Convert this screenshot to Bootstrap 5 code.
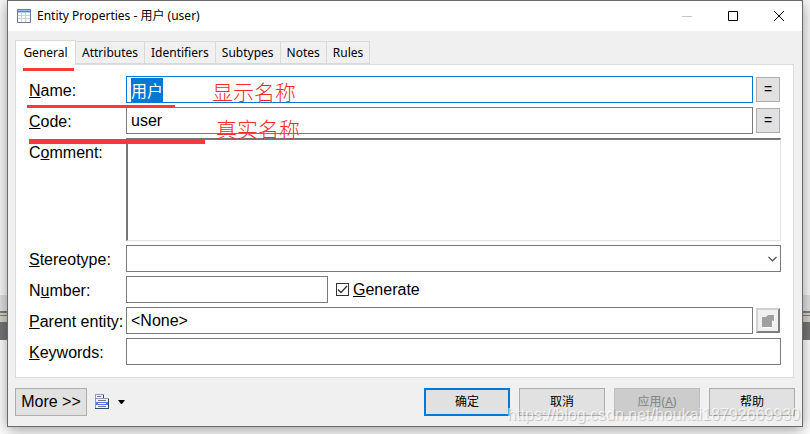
<!DOCTYPE html>
<html lang="zh-CN">
<head>
<meta charset="utf-8">
<meta name="viewport" content="width=device-width, initial-scale=1">
<title>Entity Properties</title>
<link href="https://cdn.jsdelivr.net/npm/bootstrap@5.3.0/dist/css/bootstrap.min.css" rel="stylesheet">
<style>
  :root { --ui: "Noto Sans", "Noto Sans CJK SC", sans-serif; --form: "Liberation Sans", "Noto Sans CJK SC", sans-serif; }
  body {
    font: 16px/20px var(--form); color: #000; overflow: hidden; min-height: 100vh;
    background: linear-gradient(#fafafa 295px, #e2e2e2 295px 311px, #808080 311px 313px, #d6d3ca 313px 315px, #808080 315px 316px, #d6d3ca 316px 322px, #777 322px 340px, #fff 340px);
  }
  .dialog { margin: 0 7px 7px; background: #f0f0f0; border: 1px solid #6a6a6a; box-shadow: 0 3px 14px rgba(0,0,0,.4); }
  .title-bar { height: 30px; background: #fff; font: 12px/16px var(--ui); padding-left: 9px; gap: 6px; }
  .win-btn { width: 46px; height: 30px; border: 0; background: none; padding: 0 0 2px; }
  .tabs { padding: 9px 7px 0; font: 12px/16px var(--ui); }
  .tabs button { height: 23px; padding: 0 6px; border: 1px solid #d9d9d9; border-left-width: 0; background: #f0f0f0; color: #000; flex: none; }
  .tabs button.active { height: 25px; width: 61px; border-left-width: 1px; border-bottom: 0; background: #fff; margin-bottom: -1px; z-index: 1; position: relative; }
  .pane { margin: 0 8px 0 7px; border: 1px solid #dcdcdc; background: #fff; padding: 11px 12px 12px 13px; }
  .form-line > label { width: 97px; flex: none; padding-top: 5px; white-space: nowrap; }
  .field { height: 27px; border: 1px solid #7a7a7a; border-radius: 0; background: #fff; padding: 0 4px; outline: 0; min-width: 0; font: inherit; color: #000; }
  .field.current { border-color: #0078d7; }
  .field.current::selection { background: #0078d7; color: #fff; }
  textarea.field { height: 103px; resize: none; border: 2px solid; border-color: #767676 #e3e3e3 #e3e3e3 #767676; border-right-width: 1px; border-bottom-width: 1px; }
  .number { width: 202px; }
  select.field { appearance: none; }
  .combo { display: grid; }
  .combo > * { grid-area: 1 / 1; }
  .combo svg { justify-self: end; align-self: center; margin-right: 4px; pointer-events: none; }
  .side-btn { width: 24px; height: 25px; border: 1px solid #adadad; background: #e1e1e1; padding: 0 0 2px; font-size: 14px; line-height: 20px; margin: 1px 1px 1px 3px; flex: none; }
  .raised { background: #f0f0f0; border: 2px outset #d0d0d0; padding: 0; }
  .tick { appearance: none; width: 13px; height: 13px; border: 1px solid #333; background: #fff; margin: 0; }
  .footer { padding: 10px 7px; }
  .acts { gap: 9px; }
  .push { height: 28px; width: 86px; border: 1px solid #adadad; background: #e1e1e1; color: #000; font: 12px/16px var(--ui); padding: 0; }
  .push.more { width: 72px; font: 16px/20px var(--form); }
  .push.main { border: 2px solid #0078d7; }
  .push:disabled { background: #ccc; border-color: #bfbfbf; color: #838383; }
  .note { position: absolute; color: #f92a2a; font: 300 21px/24px "Noto Sans CJK SC", sans-serif; pointer-events: none; }
  .rule { position: absolute; background: #fb3737; height: 3px; pointer-events: none; }
  .watermark { position: absolute; right: 10px; bottom: 9px; font: 16px/20px var(--form); color: rgba(255,255,255,.7); text-shadow: 1px 1px 1px rgba(0,0,0,.2); pointer-events: none; }
</style>
</head>
<body class="position-relative">
<main class="dialog">
  <header class="title-bar d-flex align-items-center">
    <svg width="14" height="14" viewBox="0 0 14 14" shape-rendering="crispEdges"><path fill="#6c7a94" d="M0 0h14v14H0z"/><path fill="#3f86d8" d="M0 0h14v3H0z"/><path fill="#8cc0f5" d="M1 1h12v1H1z"/><path fill="#c3cfe2" d="M1 3h12v10H1z"/><path fill="#fff" d="M1 4h3v2H1zM5 4h3v2H5zM9 4h4v2H9zM1 7h3v2H1zM5 7h3v2H5zM9 7h4v2H9zM1 10h3v3H1zM5 10h3v3H5zM9 10h4v3H9z"/></svg>
    <span class="me-auto">Entity Properties - 用户 (user)</span>
    <div class="d-flex">
    <button class="win-btn" aria-label="Minimize"><svg width="10" height="10" shape-rendering="crispEdges"><path stroke="#c5c5c5" d="M0 5.5h10"/></svg></button>
    <button class="win-btn" aria-label="Maximize"><svg width="10" height="10"><path fill="none" stroke="#000" d="M.5.5h9v9h-9z"/></svg></button>
    <button class="win-btn" aria-label="Close"><svg width="10" height="10"><path stroke="#000" d="M0 0l10 10M10 0L0 10"/></svg></button>
    </div>
  </header>
  <nav class="tabs d-flex align-items-end" role="tablist">
    <button class="active" role="tab">General</button><button role="tab">Attributes</button><button role="tab">Identifiers</button><button role="tab">Subtypes</button><button role="tab">Notes</button><button role="tab">Rules</button>
  </nav>
  <form class="pane d-flex flex-column gap-1">
    <div class="form-line d-flex"><label for="name"><u>N</u>ame:</label><input id="name" class="field current flex-grow-1" value="用户" autofocus><button type="button" class="side-btn">=</button></div>
    <div class="form-line d-flex"><label for="code"><u>C</u>ode:</label><input id="code" class="field flex-grow-1" value="user"><button type="button" class="side-btn">=</button></div>
    <div class="form-line d-flex"><label for="comment">C<u>o</u>mment:</label><textarea id="comment" class="field flex-grow-1"></textarea></div>
    <div class="form-line d-flex"><label for="stereo"><u>S</u>tereotype:</label><div class="combo flex-grow-1"><select id="stereo" class="field"><option></option></select><svg width="9" height="6"><path fill="none" stroke="#444" stroke-width="1.2" d="M.5.8l4 4 4-4"/></svg></div></div>
    <div class="form-line d-flex"><label for="number">N<u>u</u>mber:</label><input id="number" class="field number"><div class="d-flex align-items-center ms-2"><span class="combo"><input type="checkbox" id="gen" class="tick" checked><svg class="m-0" width="13" height="13"><path fill="none" stroke="#333" stroke-width="1.3" d="M2 6.500l3 3 6-6.500"/></svg></span><label class="ms-1" for="gen"><u>G</u>enerate</label></div></div>
    <div class="form-line d-flex"><label for="parent"><u>P</u>arent entity:</label><input id="parent" class="field flex-grow-1" value="&lt;None&gt;"><button type="button" class="side-btn raised d-flex align-items-center justify-content-center" aria-label="Open parent"><svg width="14" height="14"><path fill="#fff" d="M2 4h3l2-2h7v6h-2v6H2z"/><path fill="#a0a0a0" d="M1 3h4l2-2h6v6h-1l-1-1v7H1z"/></svg></button></div>
    <div class="form-line d-flex"><label for="keys"><u>K</u>eywords:</label><input id="keys" class="field flex-grow-1"></div>
  </form>
  <footer class="footer d-flex align-items-center">
    <button class="push more">More &gt;&gt;</button>
    <button class="border-0 bg-transparent p-0 ms-2 me-auto d-flex align-items-center gap-2" aria-label="Report menu">
      <svg width="15" height="16" viewBox="0 0 15 16" shape-rendering="crispEdges"><path fill="#8b9bb5" d="M0 0h9v4h5v11H0z"/><path fill="#f2f4f8" d="M1 1h7v3H1zM1 5h12v9H1z"/><path fill="#34486e" d="M13 5h1v10H0v-1h13zM8 1h1v3H8z"/><path fill="#777" d="M2 2h4v1H2zM3 6h8v1H3zM3 12h8v1H3z"/><path fill="#5b74ee" d="M1 8h12v3H1z"/><path fill="#fff" d="M3 9h8v1H3z"/></svg>
      <svg width="7" height="4"><path d="M0 0h7L4 4H3z"/></svg>
    </button>
    <div class="d-flex acts"><button class="push main">确定</button><button class="push">取消</button><button class="push" disabled>应用(<u>A</u>)</button><button class="push">帮助</button></div>
  </footer>
</main>
<div class="rule" style="left:23px;top:68px;width:51px"></div>
<div class="rule" style="left:27px;top:105px;width:148px"></div>
<div class="rule" style="left:29px;top:139px;width:176px;height:5px"></div>
<div class="note" style="left:212px;top:79px">显示名称</div>
<div class="note" style="left:216px;top:116px">真实名称</div>
<div class="watermark">https://blog.csdn.net/houkai18792669930</div>
<script src="https://cdn.jsdelivr.net/npm/bootstrap@5.3.0/dist/js/bootstrap.bundle.min.js"></script>
<script>document.getElementById('name').focus(); document.getElementById('name').select();</script>
</body>
</html>
